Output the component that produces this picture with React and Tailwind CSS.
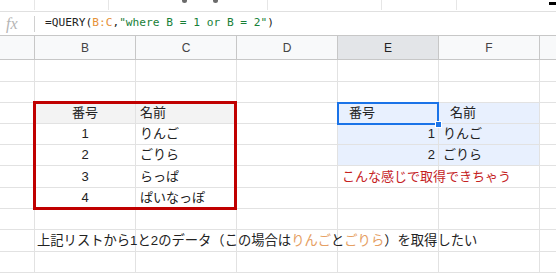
const rowHeights = [22, 21, 21, 21, 21, 22, 21, 21, 22, 21];

const jp = { fontFamily: '"Liberation Sans", "Noto Sans CJK JP", sans-serif' };

// cells: [B, C, D, E, F] each { text, align, cls }
const rows = [
  {},
  {},
  {
    B: { text: '番号', align: 'center', bg: 'bg-[#f3f3f3]' },
    C: { text: '名前', align: 'left', bg: 'bg-[#f3f3f3]' },
    E: { text: '番号', align: 'left', pad: 'pl-[11px]', bg: 'bg-[#e8f0fe]' },
    F: { text: '名前', align: 'left', pad: 'pl-[11px]', bg: 'bg-[#e8f0fe]' },
  },
  {
    B: { text: '1', align: 'center' },
    C: { text: 'りんご', align: 'left' },
    E: { text: '1', align: 'right', bg: 'bg-[#e8f0fe]' },
    F: { text: 'りんご', align: 'left', bg: 'bg-[#e8f0fe]' },
  },
  {
    B: { text: '2', align: 'center' },
    C: { text: 'ごりら', align: 'left' },
    E: { text: '2', align: 'right', bg: 'bg-[#e8f0fe]' },
    F: { text: 'ごりら', align: 'left', bg: 'bg-[#e8f0fe]' },
  },
  {
    B: { text: '3', align: 'center' },
    C: { text: 'らっぱ', align: 'left' },
    E: { text: 'こんな感じで取得できちゃう', align: 'left', color: 'text-[#c5221f]', overflow: true },
  },
  {
    B: { text: '4', align: 'center' },
    C: { text: 'ぱいなっぽ', align: 'left' },
  },
  {},
  { B: { kind: 'note' } },
  {},
];

const cols = ['B', 'C', 'D', 'E', 'F'];

function Cell({ cell }) {
  if (!cell) return <div className="h-full w-[101px] shrink-0 border-r border-[#e2e2e2]" />;
  if (cell.kind === 'note') {
    return (
      <div className="relative z-10 flex h-full w-[101px] shrink-0 items-center overflow-visible border-r border-[#e2e2e2] pl-[2px]">
        <span className="whitespace-nowrap text-[13.3px] text-[#222]">
          上記リストから1と2のデータ（この場合は
          <span className="text-[#e6a064]">りんご</span>と
          <span className="text-[#e6a064]">ごりら</span>）を取得したい
        </span>
      </div>
    );
  }
  const justify =
    cell.align === 'center' ? 'justify-center' : cell.align === 'right' ? 'justify-end pr-[3px]' : 'justify-start pl-[4px]';
  return (
    <div
      className={`relative flex h-full w-[101px] shrink-0 items-center border-r border-[#e2e2e2] ${justify} ${cell.pad || ''} ${cell.bg || ''} ${cell.overflow ? 'z-10 overflow-visible' : 'overflow-hidden'}`}
    >
      <span className={`whitespace-nowrap text-[13px] ${cell.color || 'text-[#222]'}`}>{cell.text}</span>
    </div>
  );
}

export default function App() {
  return (
    <div className="relative h-[274px] w-[556px] overflow-hidden bg-white" style={jp}>
      {/* toolbar remnant */}
      <div className="relative h-[12px] border-b border-[#e0e0e0]">
        <div className="absolute left-[34px] top-0 h-[10px] w-px bg-[#e6e6e6]" />
        <div className="absolute left-[108px] top-0 h-[10px] w-px bg-[#e6e6e6]" />
        <div className="absolute left-[267px] top-0 h-[10px] w-px bg-[#e6e6e6]" />
        <div className="absolute left-[381px] top-0 h-[10px] w-px bg-[#e6e6e6]" />
        <div className="absolute left-[456px] top-0 h-[10px] w-px bg-[#e6e6e6]" />
        <div className="absolute left-[182px] top-0 h-[3px] w-[5px] rounded-b-sm bg-[#6b6b6b]" />
        <div className="absolute left-[213px] top-0 h-[3px] w-[5px] rounded-b-sm bg-[#6b6b6b]" />
        <div className="absolute left-[549px] top-[2px] h-[3px] w-[7px] bg-black" />
      </div>

      {/* formula bar */}
      <div className="flex h-[24px] items-center border-b border-[#c7c7c7]">
        <div className="flex w-[34px] items-center pl-[6px]">
          <span className="text-[16px] italic text-[#b5b5b5]" style={{ fontFamily: '"Liberation Serif", serif' }}>
            fx
          </span>
        </div>
        <div className="h-[16px] w-px bg-[#d0d0d0]" />
        <div
          className="whitespace-nowrap pl-[10px] text-[11.2px] text-[#222]"
          style={{ fontFamily: '"DejaVu Sans Mono", monospace' }}
        >
          =QUERY(<span className="text-[#e69138]">B:C</span>,
          <span className="text-[#188038]">"where B = 1 or B = 2"</span>)
        </div>
      </div>

      {/* column headers */}
      <div className="flex h-[24px] border-b border-[#c7c7c7] bg-[#f8f9fa] text-[12px] text-[#444]">
        <div className="h-full w-[35px] shrink-0 border-r border-[#c7c7c7]" />
        {cols.map((c) => (
          <div
            key={c}
            className={`flex h-full w-[101px] shrink-0 items-center justify-center border-r border-[#c7c7c7] ${c === 'E' ? 'bg-[#e3e5e8] text-[#222]' : ''}`}
          >
            {c}
          </div>
        ))}
        <div className="h-full flex-1" />
      </div>

      {/* grid body */}
      <div className="relative">
        {rows.map((r, i) => (
          <div
            key={i}
            className="flex border-b border-[#e2e2e2]"
            style={{ height: rowHeights[i] }}
          >
            <div className="h-full w-[35px] shrink-0 border-r border-[#e2e2e2]" />
            {cols.map((c) => (
              <Cell key={c} cell={r[c]} />
            ))}
            <div className="h-full flex-1" />
          </div>
        ))}

        {/* red frame around source table */}
        <div className="pointer-events-none absolute left-[33px] top-[41px] h-[109px] w-[204px] border-[3px] border-[#c00000]" />

        {/* active cell selection */}
        <div className="pointer-events-none absolute left-[337px] top-[42px] h-[23px] w-[102px] border-2 border-[#1a73e8]" />
        <div className="pointer-events-none absolute left-[435px] top-[61px] h-[7px] w-[7px] border border-white bg-[#1a73e8]" />
      </div>
    </div>
  );
}
